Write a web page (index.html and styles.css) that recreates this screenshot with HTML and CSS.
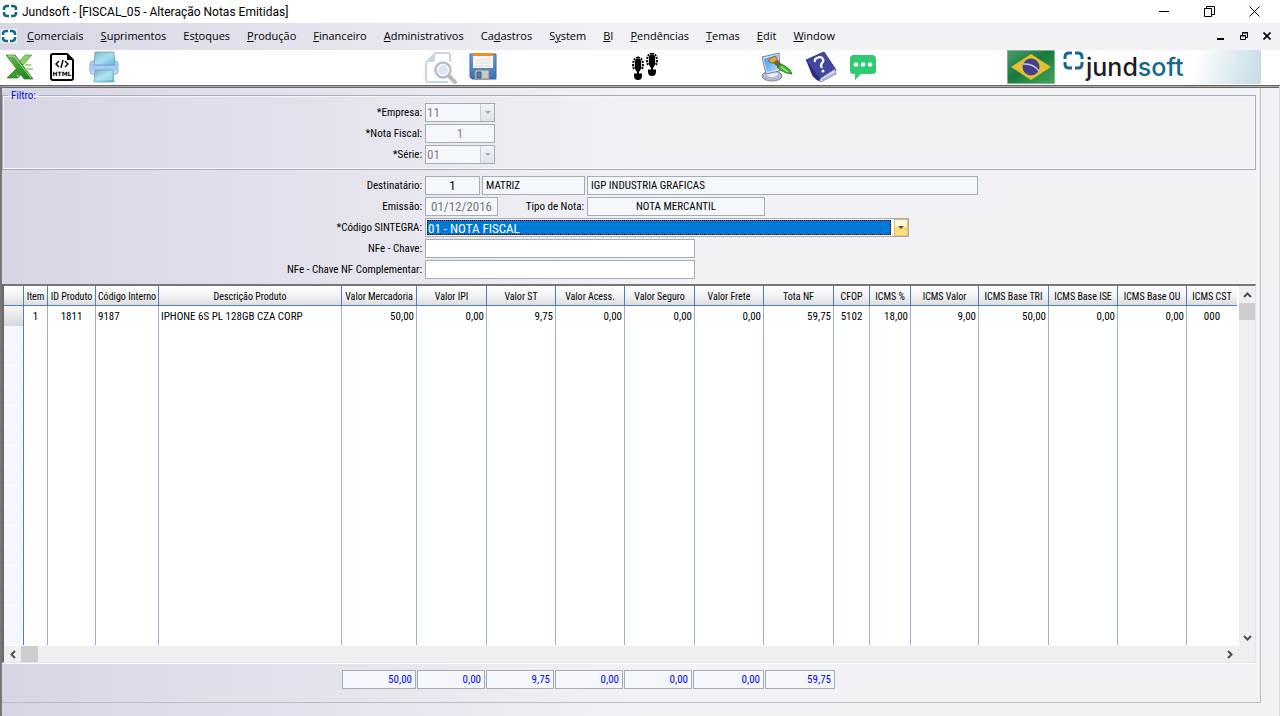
FILE: index.html
```html
<!DOCTYPE html>
<html lang="pt-BR">
<head>
<meta charset="utf-8">
<title>Jundsoft - [FISCAL_05 - Alteração Notas Emitidas]</title>
<link rel="stylesheet" href="styles.css">
</head>
<body>
<svg class="defs" aria-hidden="true">
  <defs>
    <symbol id="ring" viewBox="0 0 16 14">
      <path d="M7 2H5Q2 2 2 5V6M2 8V9Q2 12 5 12H7M9 12H11Q14 12 14 9V8M14 6V5Q14 2 11 2H9" fill="none" stroke="#14688a" stroke-width="2.6"/>
    </symbol>
    <symbol id="restore" viewBox="0 0 11 11">
      <path d="M.5 2.5h7v8h-7zM2.500 2.500v-2h8v8h-3" fill="none" stroke="#000"/>
    </symbol>
  </defs>
</svg>
<header class="titlebar">
  <svg class="app-icon"><use href="#ring"/></svg>
  <h1 class="title">Jundsoft - [FISCAL_05 - Alteração Notas Emitidas]</h1>
  <div class="window-buttons">
    <button aria-label="Minimizar"><svg width="11" height="11"><path d="M0 5.500h10" stroke="#000"/></svg></button>
    <button aria-label="Restaurar"><svg width="11" height="11"><use href="#restore"/></svg></button>
    <button aria-label="Fechar"><svg width="11" height="11"><path d="M.5.5l10 10M10.500.5l-10 10" stroke="#000"/></svg></button>
  </div>
</header>
<nav class="menubar">
  <svg class="app-icon menu-icon"><use href="#ring"/></svg>
  <button><u>C</u>omerciais</button>
  <button><u>S</u>uprimentos</button>
  <button>Es<u>t</u>oques</button>
  <button><u>P</u>rodução</button>
  <button><u>F</u>inanceiro</button>
  <button><u>A</u>dministrativos</button>
  <button>Ca<u>d</u>astros</button>
  <button>S<u>y</u>stem</button>
  <button><u>B</u>I</button>
  <button><u>P</u>endências</button>
  <button><u>T</u>emas</button>
  <button><u>E</u>dit</button>
  <button><u>W</u>indow</button>
  <div class="mdi-buttons">
    <button aria-label="Minimizar janela"><svg width="8" height="8"><path d="M0 7h7" stroke="#000" stroke-width="2"/></svg></button>
    <button aria-label="Restaurar janela"><svg width="8" height="8"><path d="M.5 3.500h5v4h-5zM2.500 3V.5h5v5H6M2 1h6M0 4h6" fill="none" stroke="#000"/></svg></button>
    <button aria-label="Fechar janela"><svg width="8" height="8"><path d="M.5.5l7 7M7.500.5l-7 7" stroke="#000" stroke-width="1.600"/></svg></button>
  </div>
</nav>
<div class="toolbar">
  <div class="tools tools-export">
    <button aria-label="Excel">
      <svg width="30" height="26" viewBox="0 0 30 26">
        <defs><linearGradient id="xg" x1="0" y1="0" x2="1" y2="1"><stop offset="0" stop-color="#77c056"/><stop offset=".5" stop-color="#3c9c31"/><stop offset="1" stop-color="#1f7a1e"/></linearGradient></defs>
        <path d="M20 1h7l-9 10-4-3z" fill="#8fce6a" stroke="#4d9a3c" stroke-width=".7"/>
        <path d="M2 24h11l5-6-4-6z" fill="#3b9a30" stroke="#277c23" stroke-width=".7"/>
        <path d="M1 1h9l18 24h-9z" fill="url(#xg)" stroke="#2c8128" stroke-width=".7"/>
        <path d="M3 2h6l17 22" fill="none" stroke="#b4e29b"/>
        <path d="M20 11h6M22 15h6M14 23l-2-2" stroke="#8fce6a" stroke-width="1.500"/>
      </svg>
    </button>
    <button aria-label="HTML">
      <svg width="24" height="28" viewBox="0 0 24 28">
        <path d="M3 1h14l6 6v18q0 2-2 2H3q-2 0-2-2V3q0-2 2-2z" fill="#fff" stroke="#000" stroke-width="2"/>
        <path d="M17 1v6h6z"/>
        <path d="M9 8l-3 3 3 3M15 8l3 3-3 3M13 7l-2 8" fill="none" stroke="#000" stroke-width="1.400"/>
        <text class="html-text" x="12" y="23" text-anchor="middle">HTML</text>
      </svg>
    </button>
    <button aria-label="Imprimir">
      <svg width="30" height="32" viewBox="0 0 30 32">
        <defs><linearGradient id="pp" x1="0" y1="0" x2="1" y2="1"><stop offset="0" stop-color="#7fb3c4"/><stop offset=".5" stop-color="#a9e0ee"/><stop offset="1" stop-color="#58b7d8"/></linearGradient>
        <linearGradient id="pb" x2="0" y2="1"><stop offset="0" stop-color="#cfe0f8"/><stop offset=".5" stop-color="#8db8f0"/><stop offset="1" stop-color="#dceafa"/></linearGradient></defs>
        <path d="M4 10q-3 0-3 3v8q0 2 3 2h22q3 0 3-2v-8q0-3-3-3z" fill="url(#pb)" stroke="#86a9cf"/>
        <path d="M6 1h19l1 13H5z" fill="url(#pp)" stroke="#629db4" stroke-width=".8"/>
        <path d="M1 15h28v3H1z" fill="#a9c8f6"/>
        <path d="M6 19h18l1 12H5z" fill="url(#pp)" stroke="#69a5bd" stroke-width=".8"/>
        <path d="M8 25l15-3v7H7z" fill="#b9e5f1" opacity=".5"/>
      </svg>
    </button>
  </div>
  <div class="tools tools-file">
    <button aria-label="Visualizar" disabled>
      <svg width="33" height="33" viewBox="0 0 33 33">
        <path d="M11 2h13q2 0 2 2v7M2 11v18q0 2 2 2h20" fill="none" stroke="#c8d5e5" stroke-width="2"/>
        <path d="M1 11L11 1v8q0 2-2 2z" fill="#c8d5e5"/>
        <circle cx="19" cy="19" r="7.500" fill="#fff" stroke="#b9bec5" stroke-width="2.500"/>
        <circle cx="19" cy="19" r="5" fill="#dce6f3"/>
        <path d="M25 25l6 6" stroke="#b5b9bf" stroke-width="4" stroke-linecap="round"/>
      </svg>
    </button>
    <button aria-label="Salvar">
      <svg width="28" height="28" viewBox="0 0 28 28">
        <defs><linearGradient id="fd" x2="0" y2="1"><stop offset="0" stop-color="#70a0d7"/><stop offset="1" stop-color="#3c70b2"/></linearGradient></defs>
        <path d="M1 1h26v25H3l-2-2z" fill="url(#fd)" stroke="#3768a4"/>
        <path d="M4 1h20v14H4z" fill="#f7f6f4"/><path d="M4 0h20v3H4z" fill="#f18b28"/>
        <path d="M6 7h16M6 10h16M6 13h16" stroke="#ddd"/>
        <path d="M6 17h14v9H6z" fill="#c9cbc3" stroke="#888"/><path d="M8 19h4v6H8z" fill="#4d83bd" stroke="#35587e"/>
      </svg>
    </button>
  </div>
  <div class="tools tools-exit">
    <button aria-label="Sair">
      <svg width="26" height="28" viewBox="0 0 26 28">
        <g id="foot"><path d="M6 5.500c2.500 0 4 3 4 6.500 0 2.500-1 4-2.500 6.500h-3C3 16 2 14.500 2 12c0-3.500 1.500-6.500 4-6.500z"/><path d="M6 4.500c-3 0-5 3-5 7 0 3 .5 4 1.500 5M6 4.500c3 0 5 3 5 7 0 3-.5 4-1.500 5" fill="none" stroke="#000" stroke-width="1.800" stroke-dasharray="2 1"/><path d="M2.500 9v5M9.500 9v5" stroke="#fff" stroke-width=".8"/><path d="M5 17h2v4H5z"/><path d="M2 20.500h8v2q0 4.500-4 4.500t-4-4.500z"/></g>
        <use href="#foot" x="14" y="-4"/>
      </svg>
    </button>
  </div>
  <div class="tools tools-help">
    <button aria-label="Temas">
      <svg width="32" height="30" viewBox="0 0 32 30">
        <defs><linearGradient id="sc" x2="1" y2="1"><stop offset="0" stop-color="#3c93ee"/><stop offset="1" stop-color="#a7e0fb"/></linearGradient></defs>
        <ellipse cx="11" cy="24" rx="10" ry="5" fill="#b8b8cd" stroke="#8585a2"/><ellipse cx="11" cy="22" rx="6" ry="3" fill="#ededf8"/>
        <path d="M1 5l17-4 1 18-14 3z" fill="#cedced" stroke="#7183a5"/><path d="M3 7l13-4 1 14-11 3z" fill="url(#sc)"/>
        <path d="M8 7l6-3 3 4-6 3-3-1z" fill="#e0a940" stroke="#755b24" stroke-width=".8"/>
        <path d="M12 11l5-3 4 5-3 3z" fill="#7d5e38"/><path d="M16 15l4-3q9 4 11 10-9-1-15-7z" fill="#4bb637" stroke="#267820"/><path d="M20 15l7 5" stroke="#a5e98c" stroke-width="1.500"/>
      </svg>
    </button>
    <button aria-label="Ajuda">
      <svg width="32" height="32" viewBox="0 0 32 32">
        <path d="M1 9L19 1l12 18-15 10z" fill="#4148a3" stroke="#2c3384"/><path d="M1 9l15 20v2Q10 29 7 24z" fill="#272d77"/>
        <path d="M16 27l14-9 1 5-15 8q-3-1 0-4z" fill="#dbdde9" stroke="#6b6f9e" stroke-width=".7"/><path d="M17 29l13-7" stroke="#9a9eb8"/>
        <path d="M10 11q-1-3 2-4 4-2 6 1 1 2-1 4-2 2 0 5" fill="none" stroke="#fff" stroke-width="2.200"/><circle cx="18" cy="20" r="1.500" fill="#fff"/>
      </svg>
    </button>
    <button aria-label="Mensagens">
      <svg width="28" height="26" viewBox="0 0 28 26">
        <path d="M4 1h19q4 0 4 4v12q0 3-4 3H12l-6 6v-6H4q-3 0-3-3V5q0-4 3-4z" fill="#2ecc71"/>
        <circle cx="7" cy="10.500" r="2.300" fill="#fff"/><circle cx="14" cy="10.500" r="2.300" fill="#fff"/><circle cx="21" cy="10.500" r="2.300" fill="#fff"/>
      </svg>
    </button>
  </div>
  <div class="brand">
    <button aria-label="Português">
      <svg width="48" height="34" viewBox="0 0 48 34">
        <defs><linearGradient id="fl" x2="1" y2="1"><stop offset="0" stop-color="#4f9b6c"/><stop offset=".45" stop-color="#167a3c"/><stop offset="1" stop-color="#45a560"/></linearGradient></defs>
        <path d="M.5.5h47v33H.5z" fill="url(#fl)" stroke="#7db58e"/><path d="M4 17L24 4l20 13-20 13z" fill="#e3bf2f"/>
        <circle cx="24" cy="17" r="8.500" fill="#43408f"/><path d="M16 14q10-1 16 7" fill="none" stroke="#c9c8dd" stroke-width="1.500"/>
      </svg>
    </button>
    <div class="logo">
      <svg width="124" height="34" viewBox="0 0 124 34">
        <path d="M9 3H6Q2 3 2 7V9M2 12V14Q2 18 6 18H9M12 18H15Q19 18 19 14V12M19 9V7Q19 3 15 3H12" fill="none" stroke="#14688f" stroke-width="3"/>
        <text class="logo-text" x="23" y="26">jund<tspan class="logo-blue">soft</tspan></text>
      </svg>
    </div>
  </div>
</div>
<main class="workspace">
  <div class="panel">
    <fieldset class="filter">
      <legend>Filtro:</legend>
      <div class="row"><label for="empresa">*Empresa:</label>
        <div class="combo combo-off w-s"><select id="empresa" disabled><option>11</option></select><span class="arrow"></span></div></div>
      <div class="row"><label for="nota">*Nota Fiscal:</label><input id="nota" class="off big center w-s" value="1" disabled></div>
      <div class="row"><label for="serie">*Série:</label>
        <div class="combo combo-off w-s"><select id="serie" disabled><option>01</option></select><span class="arrow"></span></div></div>
    </fieldset>
    <section class="details">
      <div class="row"><label for="dest">Destinatário:</label>
        <input id="dest" class="ro big center w-id" value="1" readonly>
        <input class="ro w-unit" aria-label="Unidade" value="MATRIZ" readonly>
        <input class="ro w-name" aria-label="Nome do destinatário" value="IGP INDUSTRIA GRAFICAS" readonly></div>
      <div class="row"><label for="emissao">Emissão:</label>
        <input id="emissao" class="ro big grey center w-date" value="01/12/2016" readonly>
        <label class="inner" for="tipo">Tipo de Nota:</label><input id="tipo" class="ro center w-type" value="NOTA MERCANTIL" readonly></div>
      <div class="row"><label for="sintegra">*Código SINTEGRA:</label>
        <div class="combo combo-on w-sin"><select id="sintegra"><option>01 - NOTA FISCAL</option></select><span class="arrow"></span></div></div>
      <div class="row"><label for="chave">NFe - Chave:</label><input id="chave" class="w-key"></div>
      <div class="row"><label for="chavec">NFe - Chave NF Complementar:</label><input id="chavec" class="w-key"></div>
    </section>
    <section class="grid">
      <div class="grid-view">
        <div class="table-area">
          <table>
            <colgroup><col class="c20"><col class="c24"><col class="c48"><col class="c63"><col class="c183"><col class="c75"><col class="c70"><col class="c69"><col class="c69"><col class="c70"><col class="c69"><col class="c70"><col class="c36"><col class="c41"><col class="c68"><col class="c70"><col class="c69"><col class="c69"><col class="c51"></colgroup>
            <thead><tr><th></th><th>Item</th><th>ID Produto</th><th>Código Interno</th><th>Descrição Produto</th><th>Valor Mercadoria</th><th>Valor IPI</th><th>Valor ST</th><th>Valor Acess.</th><th>Valor Seguro</th><th>Valor Frete</th><th>Tota NF</th><th>CFOP</th><th>ICMS %</th><th>ICMS Valor</th><th>ICMS Base TRI</th><th>ICMS Base ISE</th><th>ICMS Base OU</th><th>ICMS CST</th></tr></thead>
            <tbody>
              <tr><td class="current"></td><td class="mid">1</td><td class="mid">1811</td><td>9187</td><td>IPHONE 6S PL 128GB CZA CORP</td><td class="num">50,00</td><td class="num">0,00</td><td class="num">9,75</td><td class="num">0,00</td><td class="num">0,00</td><td class="num">0,00</td><td class="num">59,75</td><td class="mid">5102</td><td class="num">18,00</td><td class="num">9,00</td><td class="num">50,00</td><td class="num">0,00</td><td class="num">0,00</td><td class="mid">000</td></tr>
              <tr class="blank"><td></td><td></td><td></td><td></td><td></td><td></td><td></td><td></td><td></td><td></td><td></td><td></td><td></td><td></td><td></td><td></td><td></td><td></td><td></td></tr>
            </tbody>
          </table>
        </div>
        <div class="vscroll">
          <button aria-label="Subir"><svg width="9" height="6"><path d="M1 5l3.500-3.500L8 5" fill="none" stroke="#505050" stroke-width="2"/></svg></button>
          <span class="thumb"></span>
          <button class="end" aria-label="Descer"><svg width="9" height="6"><path d="M1 1l3.500 3.500L8 1" fill="none" stroke="#505050" stroke-width="2"/></svg></button>
        </div>
      </div>
      <div class="hscroll">
        <button aria-label="Esquerda"><svg width="6" height="9"><path d="M5 1L1.500 4.500 5 8" fill="none" stroke="#505050" stroke-width="2"/></svg></button>
        <span class="thumb"></span>
        <button class="end" aria-label="Direita"><svg width="6" height="9"><path d="M1 1l3.500 3.500L1 8" fill="none" stroke="#505050" stroke-width="2"/></svg></button>
      </div>
    </section>
    <section class="totals">
      <input class="ro c74" aria-label="Total mercadoria" value="50,00" readonly>
      <input class="ro" aria-label="Total IPI" value="0,00" readonly>
      <input class="ro" aria-label="Total ST" value="9,75" readonly>
      <input class="ro" aria-label="Total acessórias" value="0,00" readonly>
      <input class="ro" aria-label="Total seguro" value="0,00" readonly>
      <input class="ro c71" aria-label="Total frete" value="0,00" readonly>
      <input class="ro c70" aria-label="Total NF" value="59,75" readonly>
    </section>
  </div>
</main>
</body>
</html>
```
FILE: styles.css
```css
* { box-sizing: border-box; }
body {
  margin: 0;
  min-height: 100vh;
  display: flex;
  flex-direction: column;
  background: #fff;
  color: #000;
  font: 11px/13px "Arial Narrow", "Roboto Condensed", Lato, sans-serif;
}
button { border: 0; padding: 0; background: none; font: inherit; color: inherit; display: flex; align-items: center; justify-content: center; }
svg { display: block; }
.defs { position: absolute; width: 0; height: 0; }

.titlebar { display: flex; align-items: center; height: 23px; padding: 0 3px 1px 2px; background: #fff; }
.app-icon { width: 16px; height: 14px; flex: none; }
.title { margin: 0 0 0 4px; padding-top: 1px; font: 12px/16px Roboto, "Open Sans", sans-serif; }
.window-buttons { margin-left: auto; display: flex; }
.window-buttons button { width: 45px; height: 20px; }

.menubar {
  display: flex;
  align-items: center;
  gap: 1px;
  height: 27px;
  padding: 0 0 1px 1px;
  background: linear-gradient(to right, #d7d6e4, #f2f1f6 50%);
  font: 11px/16px "Open Sans", "Noto Sans", sans-serif;
}
.menu-icon { background: #fff; margin-right: 1px; }
.menubar > button { padding: 0 8px; }
.mdi-buttons { margin-left: auto; display: flex; padding-right: 2px; }
.mdi-buttons button { width: 23px; height: 16px; }

.toolbar { display: flex; align-items: center; height: 36px; padding: 0 0 1px 5px; background: #fff; border-bottom: 1px solid #666; }
.tools { display: flex; align-items: center; gap: 12px; }
.tools-export { gap: 15px; }
.tools-file { margin-left: 305px; }
.tools-exit { margin-left: 135px; }
.tools-help { margin-left: 103px; }
.html-text { font: bold 6px "DejaVu Sans", sans-serif; }
.brand { margin-left: auto; margin-right: 19px; display: flex; gap: 8px; }
.logo { width: 198px; border-right: 1px solid #d4d4d8; background: linear-gradient(105deg, #fff 65%, #dceaf0 85%, #c6dce5); }
.logo-text { font: 500 25px Inter, sans-serif; fill: #1c1c1c; }
.logo-blue { fill: #12688f; }

.workspace {
  flex: 1;
  display: flex;
  flex-direction: column;
  padding: 1px 18px 13px 0;
  border-top: 1px solid #aaa;
  border-left: 2px solid #777;
  border-right: 1px solid #dcdce0;
  background: linear-gradient(to right, #d6d5e3, #f2f1f6 50%);
  box-shadow: inset 0 1px #666;
}
.panel { flex: 1; display: flex; flex-direction: column; border-right: 1px solid #bdbdbd; border-bottom: 1px solid #bdbdbd; }
.filter { margin: 1px 4px 0 0; padding: 1px 0 5px; border: 1px solid #a5aeb6; min-width: 0; box-shadow: inset 0 0 0 1px #f6f6fa; display: block; }
.filter legend { margin-left: 5px; padding: 0 3px; color: #00f; }
.details { padding: 6px 0 5px 1px; }
.row { display: flex; align-items: center; height: 19px; gap: 2px; }
.row + .row { margin-top: 2px; }
.row > label { width: 419px; margin-right: 1px; flex: none; text-align: right; }
.row > label.inner { width: 84px; }

input, select { font: inherit; color: inherit; border-radius: 0; outline: 0; min-width: 0; }
input { height: 19px; padding: 0 3px; border: 1px solid #a3adb5; background: #fff; }
.ro, .off { background: #f4f8fd; }
.off { color: #8d7596; }
.big { font-size: 13px; line-height: 15px; }
.grey { color: #777; }
.center { text-align: center; }
.w-s { width: 70px; }
.w-id { width: 55px; }
.w-unit { width: 103px; }
.w-name { width: 391px; }
.w-date { width: 73px; padding: 0; }
.w-type { width: 178px; }
.w-sin { width: 484px; }
.w-key { width: 270px; }

.combo { display: flex; height: 19px; border: 1px solid #a3adb5; background: #fff; font-size: 13px; line-height: 15px; }
.combo select { flex: 1; appearance: none; border: 0; padding: 0 1px; background: transparent; opacity: 1; }
.arrow { width: 14px; display: flex; align-items: center; justify-content: center; border-left: 1px solid #c3d0da; background: linear-gradient(#f1f4f7, #dde3e9); }
.arrow::after { content: ""; border: 3px solid transparent; border-top-color: #a9adb2; border-bottom: 0; }
.combo-off { background: #f4f8fd; color: #8d7596; }
.combo-on { padding: 1px 0; }
.combo-on select { margin: 0 3px 0 1px; border: 1px dotted #000; background: #0078d7; color: #fff; padding: 0; }
.combo-on .arrow { margin: -1px 0; border: 1px solid #e2bd62; background: linear-gradient(#fdf6dc 45%, #fbd75c 50%, #fce58f); }
.combo-on .arrow::after { border-top-color: #555; }

.grid { flex: 1; display: flex; flex-direction: column; margin: 0 4px 0 0; border: 2px solid #696969; border-right: 1px solid #e3e3e3; border-bottom: 1px solid #e3e3e3; border-top-color: #777; background: #efefef; box-shadow: 0 1px #fff; }
.grid-view { flex: 1; display: flex; }
.table-area { flex: 1; min-width: 0; overflow: hidden; display: flex; background: #fff; border-bottom: 1px solid #fff; }
table { table-layout: fixed; width: 1234px; border-collapse: separate; border-spacing: 0; }
th, td { padding: 0 2px; height: 20px; border-right: 1px solid #94b2da; white-space: nowrap; overflow: hidden; text-align: left; }
th { padding: 1px 0 0; font-size: 10px; font-weight: normal; text-align: center; border-right-color: #4a7fc1; border-bottom: 1px solid #4a7fc1; background: linear-gradient(#fff, #f3f3f5 50%, #dcdde1); }
td:first-child { border-right-color: #4a7fc1; }
.current { background: linear-gradient(#f7f7f8, #d6d7dc); }
.blank td { height: auto; }
.blank td:first-child { background: repeating-linear-gradient(#f4f8fd 0 19px, #fff 19px 20px); }
td.mid { text-align: center; }
td.num { text-align: right; }
.c20 { width: 20px; } .c24 { width: 24px; } .c36 { width: 36px; } .c41 { width: 41px; }
.c48 { width: 48px; } .c51 { width: 51px; } .c63 { width: 63px; } .c68 { width: 68px; }
.c69 { width: 69px; } .c70 { width: 70px; } .c75 { width: 75px; } .c183 { width: 183px; }
.vscroll { width: 18px; display: flex; flex-direction: column; border-left: 2px solid #fff; }
.vscroll button { height: 17px; }
.vscroll .thumb { height: 17px; background: #cdcdcd; }
.vscroll .end { margin-top: auto; }
.hscroll { height: 16px; display: flex; padding-right: 17px; }
.hscroll button { width: 17px; }
.hscroll .thumb { width: 17px; background: #cdcdcd; }
.hscroll .end { margin-left: auto; }

.totals { display: flex; gap: 1px; padding: 7px 0 13px 340px; color: #00f; }
.totals input { width: 68px; text-align: right; }
.totals .c74 { width: 74px; }
.totals .c71 { width: 71px; }
.totals .c70 { width: 70px; }
```
